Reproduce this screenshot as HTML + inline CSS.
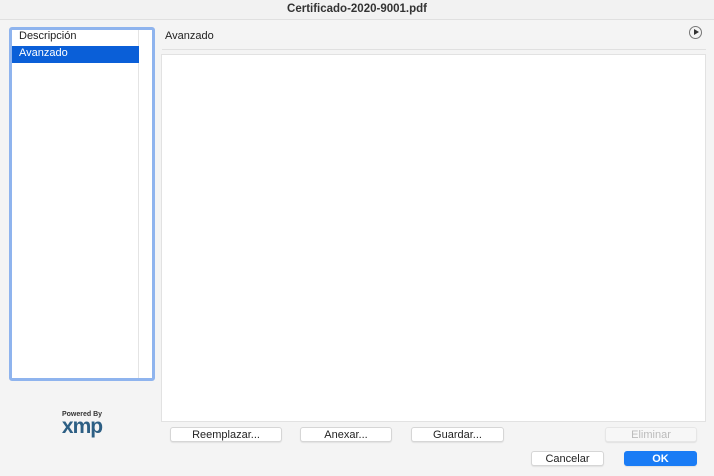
<html><head><style>
body{margin:0;width:714px;height:476px;background:#f4f4f4;font-family:"Liberation Sans",sans-serif;position:relative;overflow:hidden;font-size:11px;color:#222}
div{position:absolute;box-sizing:border-box}
.btn{background:#fff;border:1px solid #d6d6d6;border-radius:3px;text-align:center;font-size:11px;line-height:14px;height:15px;box-shadow:0 1px 1px rgba(0,0,0,.08)}
</style></head><body>
<div style="left:0;top:0;width:714px;height:20px;background:#f2f2f2;border-bottom:1px solid #e0e0e0;text-align:center;font-weight:bold;font-size:11.5px;line-height:18px;color:#333">Certificado-2020-9001.pdf</div>
<div style="left:9px;top:27px;width:146px;height:354px;border:3px solid #8fb4ee;border-radius:3px;background:#fff"></div>
<div style="left:138px;top:30px;width:1px;height:348px;background:#e4e4e4"></div>
<div style="left:19px;top:30px;font-size:11px">Descripción</div>
<div style="left:12px;top:46px;width:127px;height:17px;background:#0a5fd8;color:#fff;padding-left:7px;line-height:15px">Avanzado</div>
<div style="left:165px;top:30px;font-size:11px">Avanzado</div>
<div style="left:162px;top:49px;width:544px;height:1px;background:#e0e0e0"></div>
<div style="left:689px;top:26px;width:13px;height:13px;border:1px solid #777;border-radius:50%"></div>
<div style="left:694px;top:29px;width:0;height:0;border-left:5px solid #333;border-top:3.5px solid transparent;border-bottom:3.5px solid transparent"></div>
<div style="left:161px;top:54px;width:545px;height:368px;background:#fff;border:1px solid #e2e2e2"></div>
<div style="left:47px;top:411px;width:70px;text-align:center;font-size:7px;font-weight:bold;color:#333">Powered By</div>
<div style="left:47px;top:416px;width:70px;text-align:center;font-size:21px;font-weight:bold;color:#2d5f84;letter-spacing:-1px;line-height:22px">xmp</div>
<div class="btn" style="left:170px;top:427px;width:112px">Reemplazar...</div>
<div class="btn" style="left:300px;top:427px;width:92px">Anexar...</div>
<div class="btn" style="left:411px;top:427px;width:93px">Guardar...</div>
<div class="btn" style="left:605px;top:427px;width:92px;color:#bbb;border-color:#e6e6e6;background:#f7f7f7">Eliminar</div>
<div class="btn" style="left:531px;top:451px;width:73px">Cancelar</div>
<div class="btn" style="left:624px;top:451px;width:73px;background:#1a7cf5;border-color:#1a7cf5;color:#fff;font-weight:bold">OK</div>
</body></html>
